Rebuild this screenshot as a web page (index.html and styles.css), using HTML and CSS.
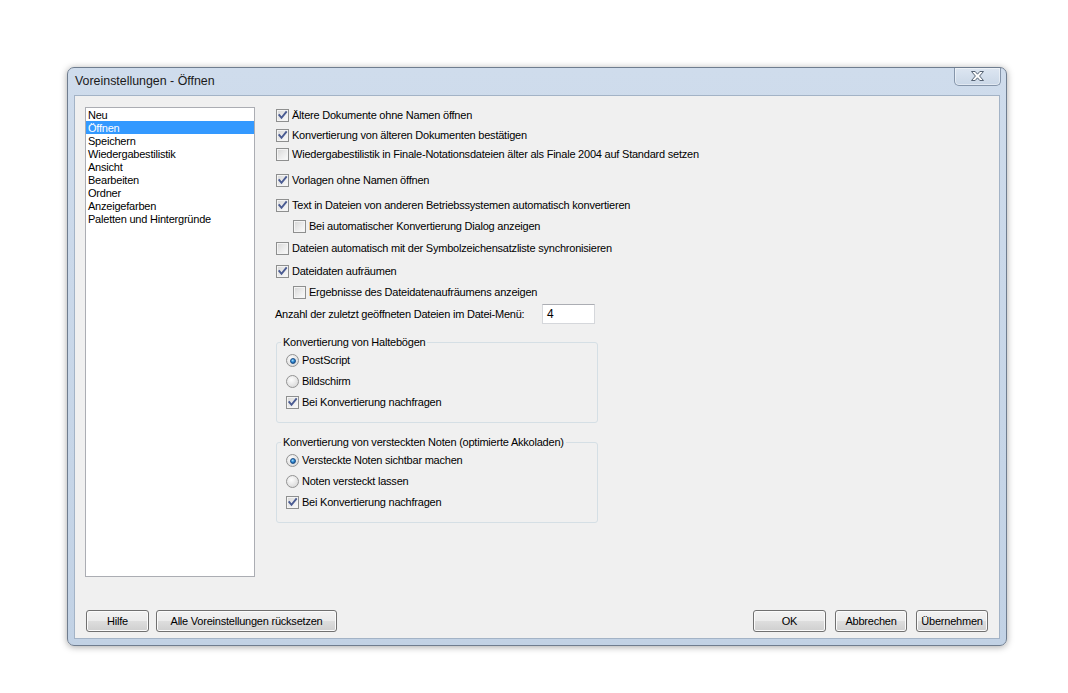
FILE: index.html
```html
<!DOCTYPE html>
<html lang="de">
<head>
<meta charset="utf-8">
<title>Voreinstellungen - Öffnen</title>
<link rel="stylesheet" href="styles.css">
</head>
<body>
<div class="window">
  <div class="titlebar">
    <div class="title">Voreinstellungen - Öffnen</div>
    <div class="close">
      <svg width="13" height="10" viewBox="0 0 13 10"><path d="M0.5 0.5H4.2L6.5 3.2L8.8 0.5H12.5L8.6 5L12.5 9.5H8.8L6.5 6.8L4.2 9.5H0.5L4.4 5Z" fill="#fdfdfd" stroke="#566374" stroke-width="1" stroke-linejoin="round"/></svg>
    </div>
  </div>
  <div class="client">
    <div class="main">
      <ul class="list">
        <li>Neu</li>
        <li class="sel">Öffnen</li>
        <li>Speichern</li>
        <li>Wiedergabestilistik</li>
        <li>Ansicht</li>
        <li>Bearbeiten</li>
        <li>Ordner</li>
        <li>Anzeigefarben</li>
        <li>Paletten und Hintergründe</li>
      </ul>
      <div class="options">
        <div class="row r1"><span class="cb on"><svg viewBox="0 0 11 11"><path d="M2.3 5.2l2.2 2.6 4.6-5.6" /></svg></span>Ältere Dokumente ohne Namen öffnen</div>
        <div class="row r2"><span class="cb on"><svg viewBox="0 0 11 11"><path d="M2.3 5.2l2.2 2.6 4.6-5.6" /></svg></span>Konvertierung von älteren Dokumenten bestätigen</div>
        <div class="row r3"><span class="cb"></span>Wiedergabestilistik in Finale-Notationsdateien älter als Finale 2004 auf Standard setzen</div>
        <div class="row r4"><span class="cb on"><svg viewBox="0 0 11 11"><path d="M2.3 5.2l2.2 2.6 4.6-5.6" /></svg></span>Vorlagen ohne Namen öffnen</div>
        <div class="row r5"><span class="cb on"><svg viewBox="0 0 11 11"><path d="M2.3 5.2l2.2 2.6 4.6-5.6" /></svg></span>Text in Dateien von anderen Betriebssystemen automatisch konvertieren</div>
        <div class="row r6 sub"><span class="cb"></span>Bei automatischer Konvertierung Dialog anzeigen</div>
        <div class="row r7"><span class="cb"></span>Dateien automatisch mit der Symbolzeichensatzliste synchronisieren</div>
        <div class="row r8"><span class="cb on"><svg viewBox="0 0 11 11"><path d="M2.3 5.2l2.2 2.6 4.6-5.6" /></svg></span>Dateidaten aufräumen</div>
        <div class="row r9 sub"><span class="cb"></span>Ergebnisse des Dateidatenaufräumens anzeigen</div>
        <div class="inputrow"><span class="label">Anzahl der zuletzt geöffneten Dateien im Datei-Menü:</span><span class="input">4</span></div>

        <fieldset class="group g1">
          <legend>Konvertierung von Haltebögen</legend>
          <div class="grow"><span class="rb on"></span>PostScript</div>
          <div class="grow"><span class="rb"></span>Bildschirm</div>
          <div class="grow"><span class="cb on"><svg viewBox="0 0 11 11"><path d="M2.3 5.2l2.2 2.6 4.6-5.6" /></svg></span>Bei Konvertierung nachfragen</div>
        </fieldset>

        <fieldset class="group g2">
          <legend>Konvertierung von versteckten Noten (optimierte Akkoladen)</legend>
          <div class="grow"><span class="rb on"></span>Versteckte Noten sichtbar machen</div>
          <div class="grow"><span class="rb"></span>Noten versteckt lassen</div>
          <div class="grow"><span class="cb on"><svg viewBox="0 0 11 11"><path d="M2.3 5.2l2.2 2.6 4.6-5.6" /></svg></span>Bei Konvertierung nachfragen</div>
        </fieldset>
      </div>
    </div>
    <div class="buttons">
      <div class="left">
        <span class="btn w-hilfe">Hilfe</span>
        <span class="btn w-reset">Alle Voreinstellungen rücksetzen</span>
      </div>
      <div class="right">
        <span class="btn w-ok">OK</span>
        <span class="btn w-cancel">Abbrechen</span>
        <span class="btn w-apply">Übernehmen</span>
      </div>
    </div>
  </div>
</div>
</body>
</html>
```
FILE: styles.css
```css
html, body {
  margin: 0;
  padding: 0;
  background: #ffffff;
}
body {
  width: 1068px;
  height: 693px;
  overflow: hidden;
  font-family: "Liberation Sans", Arial, sans-serif;
  font-size: 11px;
  letter-spacing: -0.22px;
  color: #000;
}
.window {
  margin: 67px 0 0 67px;
  width: 940px;
  height: 579px;
  box-sizing: border-box;
  border: 1px solid #6f7d8f;
  border-radius: 7px;
  background: linear-gradient(#cfdcec, #c2d2e5);
  box-shadow: 0 1px 7px rgba(0, 0, 0, 0.35);
  display: flex;
  flex-direction: column;
}
.titlebar {
  height: 28px;
  display: flex;
  align-items: flex-start;
}
.title {
  padding: 6px 0 0 7px;
  font-size: 12.4px;
  letter-spacing: 0;
  line-height: 14px;
  color: #1a1a1a;
}
.close {
  margin-left: auto;
  margin-right: 5px;
  width: 47px;
  height: 18px;
  box-sizing: border-box;
  border: 1px solid #8595aa;
  border-top: none;
  border-radius: 0 0 5px 5px;
  background: linear-gradient(#dde6f1, #cad7e7);
  box-shadow: inset 0 0 0 1px rgba(255,255,255,0.45);
  display: flex;
  align-items: center;
  justify-content: center;
}
.close svg { display: block; margin-top: -1px; }
.client {
  margin: 0 7px 7px 7px;
  height: 542px;
  box-sizing: border-box;
  background: #f0f0f0;
  box-shadow: 0 0 0 1px #a3b3c6;
  padding: 11px 11px 0 10px;
  display: flex;
  flex-direction: column;
}
.main {
  display: flex;
  height: 470px;
}
.list {
  margin: 0;
  padding: 0;
  list-style: none;
  width: 170px;
  height: 470px;
  box-sizing: border-box;
  border: 1px solid #abadb3;
  background: #fff;
  flex: none;
}
.list li {
  height: 13px;
  line-height: 14px;
  padding-left: 2px;
  white-space: nowrap;
}
.list li.sel {
  background: #3399ff;
  color: #fff;
}
.options {
  margin-left: 21px;
  display: flex;
  flex-direction: column;
  align-items: flex-start;
}
.row, .grow {
  height: 13px;
  line-height: 13px;
  display: flex;
  align-items: center;
  white-space: nowrap;
}
.row .cb { margin-right: 3px; }
.sub { margin-left: 17px; }
.r1 { margin-top: 2px; }
.r2 { margin-top: 7px; }
.r3 { margin-top: 6px; }
.r4 { margin-top: 13px; }
.r5 { margin-top: 12px; }
.r6 { margin-top: 8px; }
.r7 { margin-top: 9px; }
.r8 { margin-top: 10px; }
.r9 { margin-top: 8px; }
.cb {
  width: 13px;
  height: 13px;
  box-sizing: border-box;
  border: 1px solid #8e8f8f;
  background: linear-gradient(135deg, #d6d6d6 0%, #ececec 55%, #fbfbfb 100%);
  box-shadow: inset 0 0 0 1px #f4f4f4;
  flex: none;
  display: flex;
  align-items: center;
  justify-content: center;
}
.cb svg {
  width: 11px;
  height: 11px;
  display: block;
}
.cb svg path {
  fill: none;
  stroke: #4a5b92;
  stroke-width: 1.9;
  stroke-linecap: square;
}
.rb {
  width: 13px;
  height: 13px;
  box-sizing: border-box;
  border-radius: 50%;
  border: 1px solid #939393;
  background: radial-gradient(circle at 40% 35%, #fdfdfd 0%, #e3e3e3 60%, #cfcfcf 100%);
  flex: none;
  display: flex;
  align-items: center;
  justify-content: center;
}
.rb.on::after {
  content: "";
  width: 6px;
  height: 6px;
  box-sizing: border-box;
  border-radius: 50%;
  background: radial-gradient(circle at 40% 35%, #a6e0fc 0%, #2f8ad6 45%, #0b3f78 100%);
  border: 1px solid #1b4f88;
}
.grow .rb, .grow .cb { margin-right: 3px; }
.inputrow {
  margin-top: 5px;
  display: flex;
  align-items: center;
  height: 20px;
  margin-left: -1px;
  white-space: nowrap;
}
.label { width: 267px; }
.input {
  width: 53px;
  height: 20px;
  box-sizing: border-box;
  border: 1px solid #d5d7db;
  border-top-color: #abadb3;
  background: #fff;
  padding-left: 4px;
  line-height: 18px;
  font-size: 12px;
}
.group {
  margin: 12px 0 0 0;
  width: 322px;
  box-sizing: border-box;
  border: 1px solid #d5dfe5;
  border-radius: 3px;
  padding: 5px 8px 13px 9px;
  min-width: 0;
}
.g2 { margin-top: 13px; }
.group legend {
  padding: 0 2px;
  margin-left: -5px;
  line-height: 13px;
  height: 13px;
  white-space: nowrap;
}
.grow + .grow { margin-top: 8px; }
.buttons {
  margin-top: 33px;
  display: flex;
  justify-content: space-between;
}
.left, .right { display: flex; }
.left { gap: 7px; margin-left: 1px; }
.right { gap: 9px; }
.btn {
  height: 22px;
  box-sizing: border-box;
  border: 1px solid #707070;
  border-radius: 3px;
  background: linear-gradient(#f2f2f2 0%, #ebebeb 48%, #dddddd 52%, #cfcfcf 100%);
  box-shadow: inset 0 0 0 1px #fbfbfb;
  display: flex;
  align-items: center;
  justify-content: center;
  white-space: nowrap;
}
.w-hilfe { width: 63px; }
.w-reset { width: 181px; }
.w-ok { width: 73px; }
.w-cancel { width: 72px; }
.w-apply { width: 72px; }
```
